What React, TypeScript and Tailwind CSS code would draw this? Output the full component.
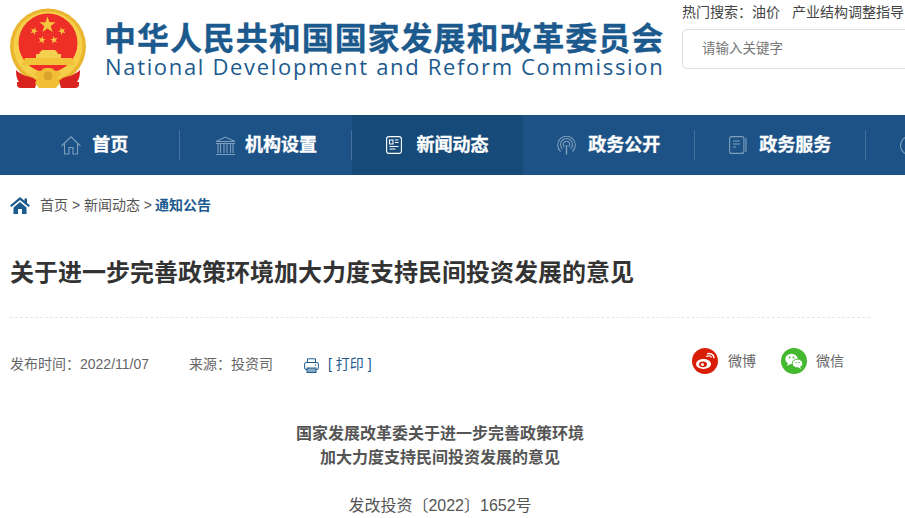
const cjk = "font-['Liberation_Sans','Noto_Sans_CJK_SC',sans-serif]";

function Star({ cx, cy, r, rot = 0 }: { cx: number; cy: number; r: number; rot?: number }) {
  const pts: string[] = [];
  for (let i = 0; i < 10; i++) {
    const rad = i % 2 === 0 ? r : r * 0.4;
    const a = (Math.PI / 5) * i - Math.PI / 2 + rot;
    pts.push(`${(cx + rad * Math.cos(a)).toFixed(2)},${(cy + rad * Math.sin(a)).toFixed(2)}`);
  }
  return <polygon points={pts.join(" ")} fill="#f3c83f" />;
}

function Emblem() {
  return (
    <svg width="76" height="80" viewBox="0 0 76 80" className="shrink-0">
      <circle cx="38" cy="38.500" r="38" fill="#eab52f" />
      <circle cx="38" cy="38" r="34.500" fill="#f6cf4a" />
      <circle cx="38" cy="35" r="29.500" fill="#ee2f27" />
      <Star cx={37.500} cy={17} r={8.500} />
      <Star cx={24} cy={23} r={4} rot={0.4} />
      <Star cx={52} cy={23} r={4} rot={-0.4} />
      <Star cx={32} cy={32} r={4} rot={0.2} />
      <Star cx={44} cy={32} r={4} rot={-0.2} />
      <path d="M29 45l3-3h13l3 3-1 1v4H30v-4z" fill="#f4d04e" />
      <path d="M26 46h25v4H26z" fill="#f4d04e" />
      <path d="M15 50h47l3.500 7H11.500z" fill="#f2c338" />
      <path d="M6 62c5 5 11 6 17 8l4 3-2 7H12l-2 0c-3-1-3-2-3-6L9 74c-2-3-3-6-3-12z" fill="#d9231f" />
      <path d="M70 62c-5 5-11 6-17 8l-4 3 2 7h13l2 0c3-1 3-2 3-6l-2 0c2-3 3-6 3-12z" fill="#d9231f" />
      <path d="M24 66c3-2 5-4 7-3 2-3 4-3 7-3s5 0 7 3c2-1 4 1 7 3l-5 4 3 5-4 5H29l-4-5 3-5z" fill="#f1bf36" />
      <circle cx="38" cy="68" r="4.500" fill="#d9a52a" />
    </svg>
  );
}

function HomeOutline() {
  return (
    <svg width="20" height="19" viewBox="0 0 20 19" fill="none" stroke="#7f9fbd" strokeWidth="1.100">
      <path d="M.5 10 10 .8 19.500 10" />
      <path d="M3.500 8v10h4.500v-6.500h4V18h4.500V8" />
    </svg>
  );
}

function BankIcon() {
  return (
    <svg width="21" height="19" viewBox="0 0 21 19" fill="none" stroke="#7f9fbd" strokeWidth="1.100">
      <path d="M1 5.500 10.500 1 20 5.500z" />
      <path d="M1 7.500h19M1 18.500h19M3 8v9M5.500 8v9M9 8v9M12 8v9M15.500 8v9M18 8v9" />
    </svg>
  );
}

function NewsIcon() {
  return (
    <svg width="16" height="18" viewBox="0 0 16 18" fill="none" stroke="#ffffff" strokeWidth="1.100">
      <rect x="0.600" y="0.600" width="14.800" height="16.800" rx="2.500" />
      <path d="M3.500 4h3.500v4H3.500zM9 4h3.500M9 6.500h3.500M3.500 10.500h9M3.500 13h6" />
    </svg>
  );
}

function SignalIcon() {
  return (
    <svg width="19" height="19" viewBox="0 0 19 19" fill="none" stroke="#7f9fbd" strokeWidth="1.100">
      <path d="M3.500 15.500a8.800 8.800 0 1 1 12 0" />
      <path d="M5.500 13a6 6 0 1 1 8 0" />
      <path d="M7.300 10.800a3.200 3.200 0 1 1 4.400 0" />
      <path d="M9.500 9v9.500" strokeWidth="1.500" />
    </svg>
  );
}

function BookIcon() {
  return (
    <svg width="18" height="18" viewBox="0 0 18 18" fill="none" stroke="#7f9fbd" strokeWidth="1.100">
      <rect x="0.600" y="0.600" width="14.300" height="16.800" rx="2" />
      <path d="M17 2v14M4 5h7M4 8h7M4 11h3" />
    </svg>
  );
}

function CircleIcon() {
  return (
    <svg width="19" height="19" viewBox="0 0 19 19" fill="none" stroke="#7f9fbd" strokeWidth="1.100">
      <circle cx="9.500" cy="9.500" r="9" />
    </svg>
  );
}

function NavItem({ icon, label, active, last, gap }: { icon: React.ReactNode; label: string; active?: boolean; last?: boolean; gap: string }) {
  return (
    <div className={`relative flex h-full w-[171.4px] shrink-0 items-center justify-center ${gap} ${active ? "bg-[#164a78]" : ""}`}>
      {icon}
      <span className="text-[18px] font-bold text-white [-webkit-text-stroke:0.3px_#ffffff]">{label}</span>
      {!last && <span className="absolute right-0 top-[15px] h-[30px] w-px bg-[#46739d]" />}
    </div>
  );
}

function WeiboIcon() {
  return (
    <svg width="26" height="26" viewBox="0 0 26 26">
      <circle cx="13" cy="13" r="13" fill="#d81e06" />
      <ellipse cx="11.500" cy="16" rx="7.500" ry="5" fill="#fff" />
      <ellipse cx="11" cy="16.300" rx="4" ry="2.900" fill="#d81e06" />
      <circle cx="10.500" cy="16.500" r="1.500" fill="#fff" />
      <path d="M14 8.500c2-1 5-1.200 5.500 1" fill="none" stroke="#fff" strokeWidth="1.300" />
      <path d="M15 5.800c3-.8 7 0 7 4.500" fill="none" stroke="#fff" strokeWidth="1.300" />
    </svg>
  );
}

function WechatIcon() {
  return (
    <svg width="26" height="26" viewBox="0 0 26 26">
      <circle cx="13" cy="13" r="13" fill="#44b82f" />
      <ellipse cx="10.500" cy="11" rx="6.200" ry="5.200" fill="#fff" />
      <path d="M7 15l-1 3 3.500-2z" fill="#fff" />
      <ellipse cx="16.500" cy="15.500" rx="5.300" ry="4.400" fill="#fff" stroke="#44b82f" strokeWidth="1" />
      <path d="M19 19l1.500 2-3.500-1.500z" fill="#fff" />
      <circle cx="8.500" cy="9.500" r="0.900" fill="#44b82f" />
      <circle cx="12.500" cy="9.500" r="0.900" fill="#44b82f" />
      <circle cx="15" cy="14.500" r="0.700" fill="#44b82f" />
      <circle cx="18" cy="14.500" r="0.700" fill="#44b82f" />
    </svg>
  );
}

export default function App() {
  return (
    <div className={`h-[518px] w-[905px] overflow-hidden bg-white ${cjk}`}>
      <header className="flex h-[115px]">
        <div className="ml-[10px] mt-[8px]">
          <Emblem />
        </div>
        <div className="ml-[19px] mt-[23px] w-[577px] shrink-0">
          <div className="-ml-[1px] whitespace-nowrap text-[32px] font-bold leading-[32px] tracking-[0.95px] text-[#1c5a8e] [-webkit-text-stroke:0.3px_#1c5a8e]">
            中华人民共和国国家发展和改革委员会
          </div>
          <div className="whitespace-nowrap font-['Open_Sans',sans-serif] text-[22px] leading-[22px] tracking-[1.67px] text-[#1c5a8e]">
            National Development and Reform Commission
          </div>
        </div>
        <div className="w-[300px] shrink-0">
          <div className="mt-[3px] whitespace-nowrap text-[14px] leading-[18px] text-[#444]">
            热门搜索：<span>油价</span>
            <span className="ml-[12px]">产业结构调整指导</span>
          </div>
          <div className="mt-[8px] flex h-[40px] w-[300px] items-center rounded-[5px] border border-[#ddd] pl-[19px] text-[13.500px] text-[#777]">
            请输入关键字
          </div>
        </div>
      </header>

      <nav className="flex h-[60px] overflow-hidden bg-[#1c5285] pl-[9px]">
        <NavItem icon={<HomeOutline />} label="首页" gap="gap-[11px]" />
        <NavItem icon={<BankIcon />} label="机构设置" gap="gap-[9px]" />
        <NavItem icon={<NewsIcon />} label="新闻动态" active last gap="gap-[14px]" />
        <NavItem icon={<SignalIcon />} label="政务公开" gap="gap-[12px]" />
        <NavItem icon={<BookIcon />} label="政务服务" gap="gap-[12px]" />
        <div className="flex h-full shrink-0 items-center pl-[34px]">
          <CircleIcon />
        </div>
      </nav>

      <div className="flex h-[60px] items-center pl-[10px] text-[14px] text-[#555]">
        <svg width="20" height="17" viewBox="0 0 20 17" className="mr-[10px]">
          <path d="M10 0 0 8.500l1.500 1.500L10 3l8.500 7L20 8.500l-3-2.500V1.500h-2.500v2.300z" fill="#1c5a8e" />
          <path d="M3.500 10.500 10 5l6.500 5.500V17h-4.500v-5H8v5H3.500z" fill="#1c5a8e" />
        </svg>
        <span>首页 &gt; 新闻动态 &gt; </span>
        <span className="ml-[3px] font-bold text-[#1c5a8e]">通知公告</span>
      </div>

      <main className="ml-[10px] w-[860px]">
        <h1 className="mt-[20px] h-[63px] whitespace-nowrap border-b border-dashed border-[#e6e6e6] text-[24px] font-bold leading-[36px] text-[#333]">
          关于进一步完善政策环境加大力度支持民间投资发展的意见
        </h1>
        <div className="mt-[30px] flex h-[26px] items-center text-[14px] text-[#666]">
          <span className="mt-[6px]">发布时间：2022/11/07</span>
          <span className="ml-[40px] mt-[6px]">来源：投资司</span>
          <svg width="15" height="15" viewBox="0 0 15 15" fill="none" className="ml-[31px] mt-[8px]">
            <path d="M3.500 4.500V.8h8v3.700" stroke="#1c5a8e" />
            <rect x="0.600" y="4.500" width="13.800" height="7" rx="1.500" stroke="#1c5a8e" />
            <rect x="3" y="10" width="9" height="4.500" fill="#8aa9c6" stroke="#1c5a8e" />
            <circle cx="11.500" cy="7" r="0.700" fill="#1c5a8e" />
          </svg>
          <span className="ml-[9px] mt-[6px] text-[#1c5a8e]">[ 打印 ]</span>
          <div className="ml-auto flex items-center">
            <WeiboIcon />
            <span className="ml-[10px]">微博</span>
            <span className="ml-[25px]"><WechatIcon /></span>
            <span className="ml-[9px]">微信</span>
            <span className="w-[26px]" />
          </div>
        </div>
        <div className="mt-[48px] text-center text-[16px] leading-[24px] text-[#555]">
          <p className="font-bold">国家发展改革委关于进一步完善政策环境</p>
          <p className="font-bold">加大力度支持民间投资发展的意见</p>
          <p className="mt-[24px]">发改投资〔2022〕1652号</p>
        </div>
      </main>
    </div>
  );
}
